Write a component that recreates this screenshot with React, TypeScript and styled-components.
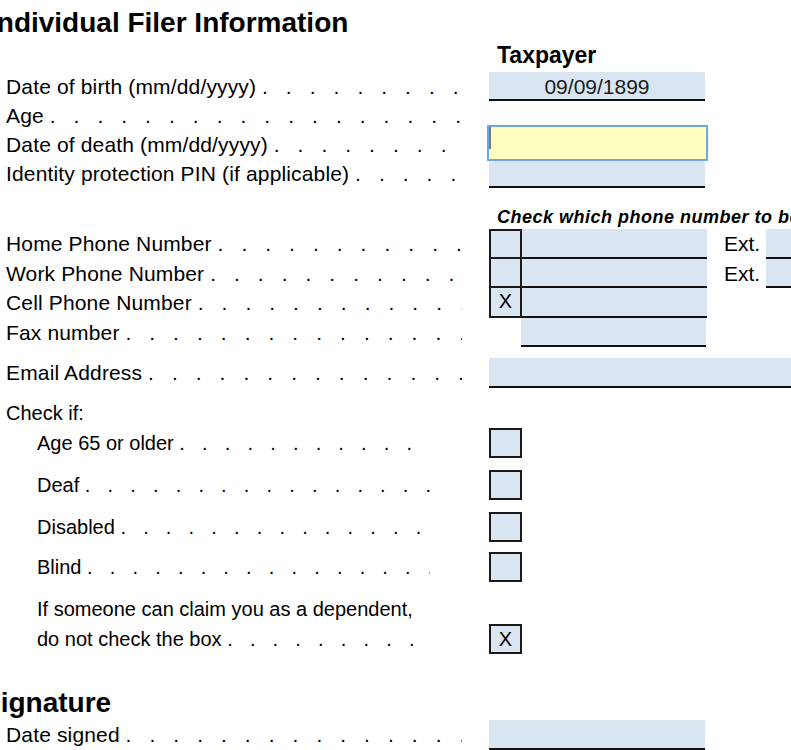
import styled, { createGlobalStyle } from "styled-components"

const GlobalStyle = createGlobalStyle`
  html, body {
    margin: 0;
    padding: 0;
    overflow: hidden;
    background: #fff;
  }
  body {
    font-family: "Liberation Sans", Arial, sans-serif;
    color: #000;
  }
`

const Page = styled.div`
  width: 791px;
  height: 750px;
  display: flex;
  flex-direction: column;
`

const Title = styled.h1<{ $top: number; $shift: number }>`
  margin: ${p => p.$top}px 0 0 ${p => p.$shift}px;
  font-size: 28px;
  line-height: 28px;
  font-weight: bold;
  white-space: nowrap;
`

const ColumnHead = styled.div`
  margin-top: 7px;
  padding-left: 497px;
  font-size: 23px;
  line-height: 23px;
  font-weight: bold;
  white-space: nowrap;
`

const PhoneHead = styled.div`
  margin-top: 20px;
  padding-left: 497px;
  font-size: 18px;
  line-height: 18px;
  letter-spacing: 0.5px;
  font-weight: bold;
  font-style: italic;
  white-space: nowrap;
`

const Row = styled.div<{ $h: number; $top?: number }>`
  display: flex;
  align-items: stretch;
  height: ${p => p.$h}px;
  line-height: ${p => p.$h}px;
  margin-top: ${p => p.$top ?? 0}px;
  flex: none;
`

const LabelCell = styled.div<{ $indent?: boolean; $small?: boolean }>`
  flex: none;
  width: 489px;
  box-sizing: border-box;
  padding-left: ${p => (p.$indent ? 37 : 6)}px;
  padding-right: ${p => (p.$indent ? 59 : 27)}px;
  display: flex;
  font-size: ${p => (p.$indent || p.$small ? 20 : 21)}px;
  letter-spacing: ${p => (p.$indent || p.$small ? 0 : 0.15)}px;
  overflow: hidden;
`

const LabelText = styled.span`
  flex: none;
  white-space: nowrap;
`

const Leader = styled.span`
  flex: 1 1 0;
  min-width: 0;
  overflow: hidden;
  white-space: nowrap;
  letter-spacing: 0.29em;
  padding-left: 0.28em;
`

const Field = styled.div<{ $w: number; $gap?: number }>`
  flex: none;
  width: ${p => p.$w}px;
  margin-left: ${p => p.$gap ?? 0}px;
  box-sizing: border-box;
  background: #dae5f2;
  border-bottom: 2px solid #111;
  text-align: center;
  font-size: 21px;
  color: #1c1c1c;
`

const FocusField = styled.div`
  position: relative;
  z-index: 1;
  flex: none;
  align-self: flex-end;
  width: 217px;
  height: 32px;
  background: #ffffc2;
  outline: 2px solid #72a5e3;

  &::before {
    content: "";
    display: block;
    width: 2px;
    height: 23px;
    margin-top: -1px;
    background: #7a7a7a;
  }
`

const CheckCell = styled.div<{ $first?: boolean }>`
  flex: none;
  width: 33px;
  box-sizing: border-box;
  background: #dae5f2;
  border: 2px solid #1a1a1a;
  border-top-width: ${p => (p.$first ? 2 : 0)}px;
  text-align: center;
  font-size: 20px;
  line-height: 26px;
`

const CellSpacer = styled.div`
  flex: none;
  width: 32px;
`

const ExtLabel = styled.span`
  flex: none;
  margin-left: 17px;
  font-size: 21px;
  white-space: nowrap;
`

const Box = styled.div`
  flex: none;
  width: 33px;
  box-sizing: border-box;
  background: #dae5f2;
  border: 2px solid #1a1a1a;
  text-align: center;
  font-size: 20px;
  line-height: 26px;
`

const DOTS = ". ".repeat(40)

const Label = ({ text, indent }: { text: string; indent?: boolean }) => (
  <LabelCell $indent={indent}>
    <LabelText>{text}</LabelText>
    <Leader>{DOTS}</Leader>
  </LabelCell>
)

const phones = [
  { label: "Home Phone Number", checked: false, ext: true },
  { label: "Work Phone Number", checked: false, ext: true },
  { label: "Cell Phone Number", checked: true, ext: false },
]

const checks = [
  { label: "Age 65 or older", top: 0 },
  { label: "Deaf", top: 12 },
  { label: "Disabled", top: 12 },
  { label: "Blind", top: 10 },
]

export default function App() {
  return (
    <>
      <GlobalStyle />
      <Page>
        <Title $top={9} $shift={-11}>Individual Filer Information</Title>
        <ColumnHead>Taxpayer</ColumnHead>

        <Row $h={29} $top={5}>
          <Label text="Date of birth (mm/dd/yyyy)" />
          <Field $w={216}>09/09/1899</Field>
        </Row>
        <Row $h={29}>
          <Label text="Age" />
        </Row>
        <Row $h={29}>
          <Label text="Date of death (mm/dd/yyyy)" />
          <FocusField />
        </Row>
        <Row $h={29}>
          <Label text="Identity protection PIN (if applicable)" />
          <Field $w={216} />
        </Row>

        <PhoneHead>Check which phone number to be used</PhoneHead>
        {phones.map((ph, i) => (
          <Row key={ph.label} $h={29.5} $top={i === 0 ? 3 : 0}>
            <Label text={ph.label} />
            <CheckCell $first={i === 0}>{ph.checked ? "X" : ""}</CheckCell>
            <Field $w={185} />
            {ph.ext && (
              <>
                <ExtLabel>Ext.</ExtLabel>
                <Field $w={80} $gap={6} />
              </>
            )}
          </Row>
        ))}
        <Row $h={29.5}>
          <Label text="Fax number" />
          <CellSpacer />
          <Field $w={185} />
        </Row>

        <Row $h={30} $top={10.5}>
          <Label text="Email Address" />
          <Field $w={420} />
        </Row>

        <Row $h={29} $top={11}>
          <LabelCell $small>
            <LabelText>Check if:</LabelText>
          </LabelCell>
        </Row>
        {checks.map(c => (
          <Row key={c.label} $h={30} $top={c.top}>
            <Label text={c.label} indent />
            <Box />
          </Row>
        ))}
        <Row $h={30} $top={12}>
          <LabelCell $indent>
            <LabelText>If someone can claim you as a dependent,</LabelText>
          </LabelCell>
        </Row>
        <Row $h={30}>
          <Label text="do not check the box" indent />
          <Box>X</Box>
        </Row>

        <Title $top={35} $shift={-18}>Signature</Title>
        <Row $h={30} $top={3}>
          <Label text="Date signed" />
          <Field $w={216} />
        </Row>
      </Page>
    </>
  )
}
